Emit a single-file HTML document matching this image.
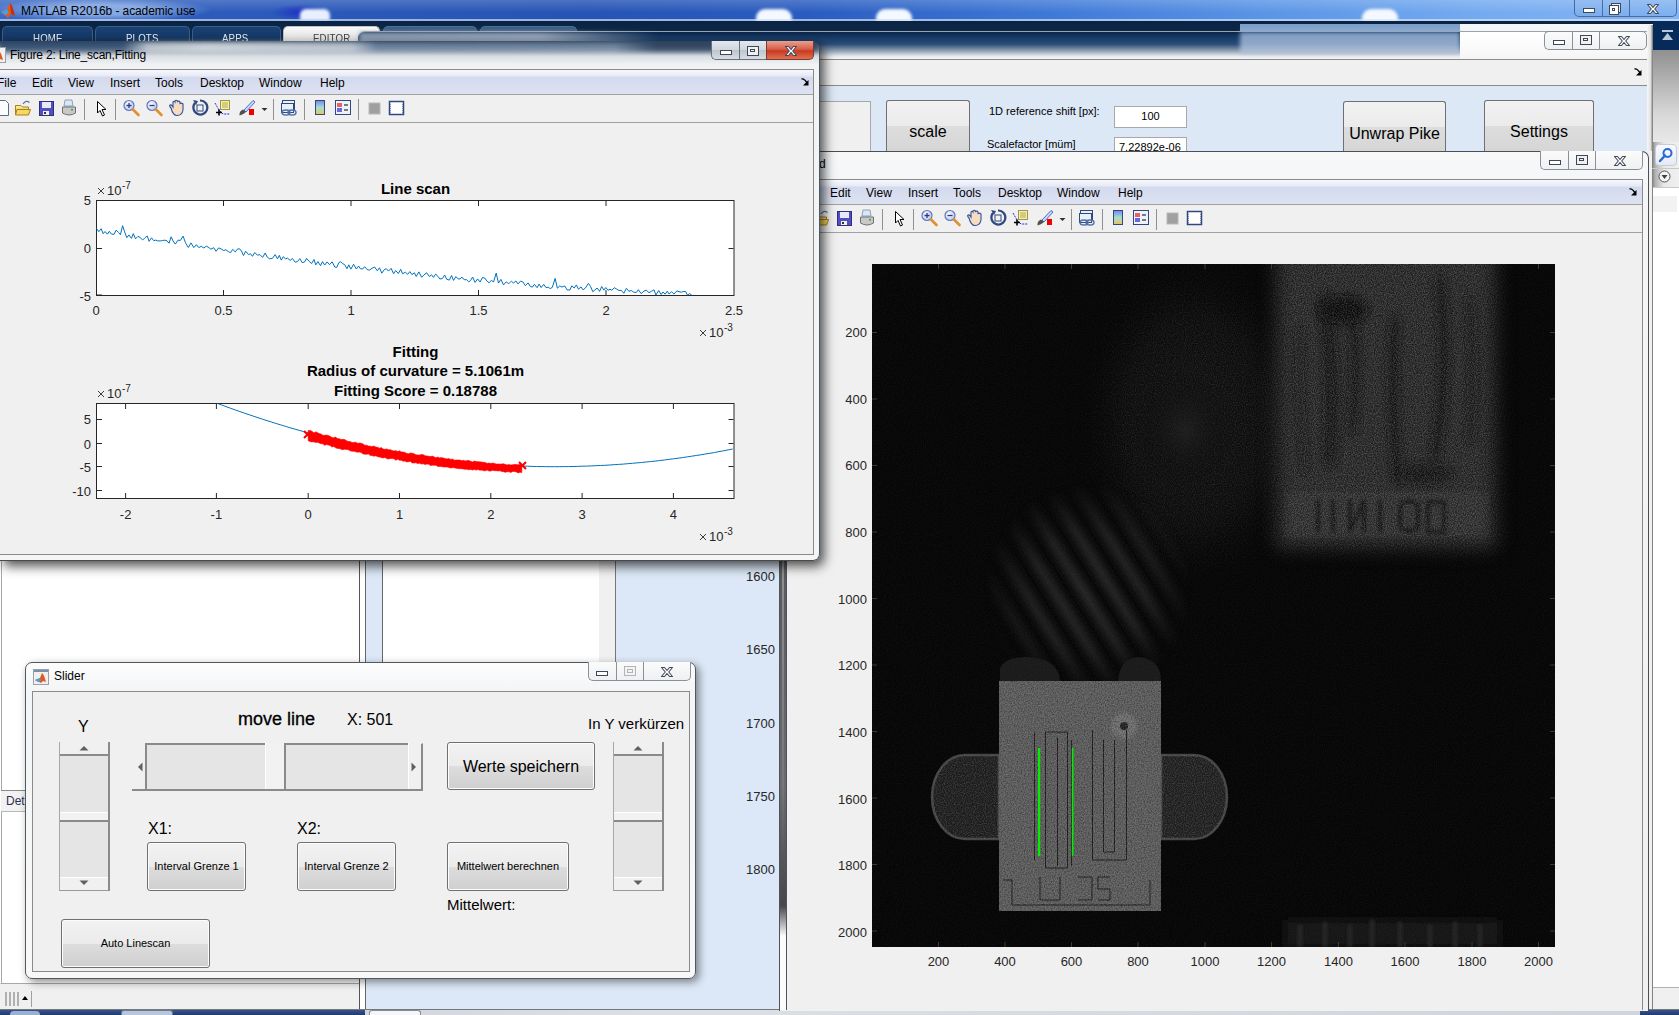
<!DOCTYPE html>
<html><head><meta charset="utf-8">
<style>
*{box-sizing:border-box;}
html,body{margin:0;padding:0;}
body{width:1679px;height:1015px;overflow:hidden;position:relative;background:#f0f0f0;font-family:"Liberation Sans",sans-serif;font-size:12px;color:#000;}
.a{position:absolute;}
.t{position:absolute;white-space:nowrap;line-height:1;}

</style></head>
<body>
<svg width="0" height="0" style="position:absolute">
<defs>
<linearGradient id="gFold" x1="0" y1="0" x2="0" y2="1"><stop offset="0" stop-color="#fff3a8"/><stop offset="1" stop-color="#e0b030"/></linearGradient>
<linearGradient id="gCbar" x1="0" y1="0" x2="0" y2="1"><stop offset="0" stop-color="#8080f0"/><stop offset="0.5" stop-color="#a0e0d0"/><stop offset="1" stop-color="#f0c060"/></linearGradient>
<radialGradient id="gLens" cx="0.4" cy="0.4" r="0.6"><stop offset="0" stop-color="#ffffff"/><stop offset="1" stop-color="#b8c8f0"/></radialGradient>
<g id="tb">
 <!-- new doc -->
 <path d="M-1,4.5 H5.5 L8.5,7.5 V19.5 H-1 Z" fill="#fafcff" stroke="#5a6c8c" stroke-width="1"/>
 <!-- open folder -->
 <path d="M15.5,9.5 H21 L22.5,11 H28.5 V18.5 H15.5 Z" fill="url(#gFold)" stroke="#a88018" stroke-width="1"/>
 <path d="M17,13.5 H30.5 L28.5,19 H15.5 Z" fill="#f8d860" stroke="#a88018" stroke-width="1"/>
 <path d="M23,8 Q26,3.5 29.5,6.5" fill="none" stroke="#5a78a0" stroke-width="1.2"/>
 <!-- save -->
 <rect x="39.5" y="5.5" width="14" height="14" fill="#5050c0" stroke="#303078"/>
 <rect x="42" y="6" width="9" height="6" fill="#e8e8f8"/>
 <rect x="43" y="15" width="6" height="4" fill="#f0f0f0"/><rect x="44" y="16" width="2" height="2" fill="#303030"/>
 <!-- print -->
 <path d="M65,4 H72 L73,10 H64 Z" fill="#d8e8f8" stroke="#7890a8" stroke-width="0.8"/>
 <path d="M62.5,11 H75.5 V17 Q69,21 62.5,17 Z" fill="#c8c8c8" stroke="#707070" stroke-width="1"/>
 <rect x="71" y="13" width="2" height="1.5" fill="#40a040"/>
 <!-- separators -->
 <rect x="84" y="3" width="1" height="21" fill="#909090"/>
 <rect x="115" y="3" width="1" height="21" fill="#909090"/>
 <rect x="273" y="3" width="1" height="21" fill="#909090"/>
 <rect x="304" y="3" width="1" height="21" fill="#909090"/>
 <rect x="358" y="3" width="1" height="21" fill="#909090"/>
 <!-- pointer -->
 <path d="M97.5,5.5 V17 L100,14.5 L102.5,20 L104.5,19 L102,13.5 H106 Z" fill="#fff" stroke="#000" stroke-width="1"/>
 <!-- zoom in -->
 <circle cx="129" cy="9.5" r="5" fill="url(#gLens)" stroke="#6878b8" stroke-width="1.2"/>
 <path d="M133,13.5 L138.5,19" stroke="#e09030" stroke-width="2.6" stroke-linecap="round"/>
 <path d="M126.5,9.5 H131.5 M129,7 V12" stroke="#2a3a88" stroke-width="1.3"/>
 <!-- zoom out -->
 <circle cx="152" cy="9.5" r="5" fill="url(#gLens)" stroke="#6878b8" stroke-width="1.2"/>
 <path d="M156,13.5 L161.5,19" stroke="#e09030" stroke-width="2.6" stroke-linecap="round"/>
 <path d="M149.5,9.5 H154.5" stroke="#2a3a88" stroke-width="1.3"/>
 <!-- pan hand -->
 <path d="M171,12 Q169,10 170,9 Q171.5,8.5 173,11 V6 Q174,4.5 175,6 V5 Q176,3.5 177.5,5 V5.5 Q179,4.5 180,6 V7.5 Q181.5,6.5 183,8 V14 Q182,19.5 177,19.5 Q173,19.5 171,12 Z" fill="#f8dcc0" stroke="#3050a0" stroke-width="1.1"/>
 <!-- rotate -->
 <path d="M195,7 A7,7 0 1 0 200,4.5" fill="none" stroke="#304880" stroke-width="2.2"/>
 <path d="M193,4 L196,9 L198,5 Z" fill="#304880"/>
 <rect x="197" y="9" width="6" height="6" fill="none" stroke="#304880" stroke-width="1"/>
 <!-- data cursor -->
 <rect x="220.5" y="4.5" width="9" height="9" fill="#f4f0b0" stroke="#a09840"/>
 <path d="M222,7 H228 M222,9 H228 M222,11 H228" stroke="#a09840" stroke-width="0.8"/>
 <path d="M215,7 L219,14 L223,18 H230" fill="none" stroke="#2030e0" stroke-width="1" stroke-dasharray="2,1"/>
 <path d="M216,16.5 H222 M219,13.5 V19.5" stroke="#000" stroke-width="1.6"/>
 <!-- brush -->
 <path d="M244,14 L253,4.5 L255,6 L246,16 Z" fill="#c8d8f8" stroke="#4060c0" stroke-width="0.9"/>
 <path d="M243,13.5 Q239,15 239.5,19.5 Q243,19 246,16 Z" fill="#505050"/>
 <rect x="249" y="13" width="5" height="6" fill="#f00000"/>
 <path d="M261.5,108 H267.5 L264.5,111 Z" transform="translate(0,-96)" fill="#303030"/>
 <!-- link -->
 <rect x="282.5" y="4.5" width="12" height="9" fill="#e8f0f8" stroke="#304880"/>
 <rect x="281.5" y="7.5" width="12" height="9" fill="#e8f0f8" stroke="#304880"/>
 <ellipse cx="286" cy="16.5" rx="4" ry="2.5" fill="none" stroke="#5070a8" stroke-width="1.4"/>
 <ellipse cx="292" cy="16.5" rx="4" ry="2.5" fill="none" stroke="#5070a8" stroke-width="1.4"/>
 <!-- colorbar -->
 <rect x="315.5" y="4.5" width="9" height="14" fill="url(#gCbar)" stroke="#304880"/>
 <!-- legend -->
 <rect x="335.5" y="4.5" width="15" height="14" fill="#eef2fa" stroke="#304880"/>
 <rect x="337" y="7" width="5" height="4" fill="#e86060"/><rect x="337" y="12" width="5" height="4" fill="#6868e0"/>
 <path d="M344,9 H348 M344,14 H348" stroke="#000" stroke-width="1"/>
 <!-- hide -->
 <rect x="369" y="7" width="11" height="11" fill="#a0a0a0" stroke="#b8b8b8"/>
 <!-- show -->
 <rect x="389.5" y="5.5" width="14" height="13" fill="#fff" stroke="#304880" stroke-width="1.5"/>
 <path d="M390,8 V17 M403,8 V17" stroke="#304880" stroke-width="1" stroke-dasharray="1,1"/>
 <rect x="392" y="8" width="9" height="8" fill="#fff"/>
</g>
</defs></svg>

<!-- MATLAB title bar -->
<div class="a" style="left:0;top:0;width:1679px;height:21px;background:linear-gradient(90deg,#3a68c4 0%,#2d5cbc 10%,#2554b4 35%,#2a5cc0 48%,#3e78d6 62%,#5a94e6 75%,#74aaf0 88%,#84b6f4 100%);"></div>
<div class="a" style="left:0;top:0;width:1679px;height:21px;background:linear-gradient(180deg,rgba(255,255,255,0.18) 0%,rgba(255,255,255,0) 60%);"></div>
<div class="a" style="left:270px;top:4px;width:60px;height:16px;border-radius:8px;background:radial-gradient(ellipse at center,rgba(30,40,200,0.8),rgba(60,90,220,0) 70%);"></div>
<div class="a" style="left:300px;top:9px;width:30px;height:12px;border-radius:6px 6px 2px 2px;background:#e8f0ff;filter:blur(1.5px);"></div>
<div class="a" style="left:756px;top:9px;width:36px;height:14px;border-radius:9px 9px 2px 2px;background:#f4f8ff;filter:blur(1.5px);"></div>
<div class="a" style="left:876px;top:9px;width:36px;height:14px;border-radius:9px 9px 2px 2px;background:#f4f8ff;filter:blur(1.5px);"></div>
<div class="a" style="left:1362px;top:9px;width:36px;height:14px;border-radius:9px 9px 2px 2px;background:#f4f8ff;filter:blur(1.5px);"></div>
<div class="a" style="left:0;top:19px;width:1679px;height:2px;background:linear-gradient(90deg,#c8d8f0,#d8e6fa);opacity:0.7;"></div>
<div class="a" style="left:-10px;top:-2px;width:220px;height:24px;border-radius:12px;background:radial-gradient(ellipse at center,rgba(200,225,255,0.55) 30%,rgba(200,225,255,0) 72%);"></div>
<svg class="a" style="left:0;top:1px" width="18" height="18"><path d="M1,11 L7,8 L10,2 Q12,3 15,15 L11,13 L8,17 Z" fill="#e05a20"/><path d="M1,11 L7,8 L9,12 L5,14 Z" fill="#4aa0d8"/><path d="M10,2 Q12,3 15,15 L11,13 Z" fill="#c03010"/></svg>
<div class="t" style="left:21px;top:5px;font-size:12px;letter-spacing:-0.1px;color:#000;">MATLAB R2016b - academic use</div>
<!-- main title buttons -->
<div class="a" style="left:1574px;top:0;width:103px;height:17px;border:1px solid #4a6aa0;border-top:none;border-radius:0 0 5px 5px;background:linear-gradient(180deg,rgba(150,190,240,0.6),rgba(120,170,235,0.5));"></div>
<div class="a" style="left:1602px;top:0;width:1px;height:16px;background:#4a6aa0;"></div>
<div class="a" style="left:1629px;top:0;width:1px;height:16px;background:#4a6aa0;"></div>
<div class="a" style="left:1583px;top:8px;width:12px;height:5px;border:1.5px solid #404858;background:#fff;"></div>
<div class="a" style="left:1611px;top:3px;width:10px;height:10px;border:1.5px solid #404858;background:#eee;"></div>
<div class="a" y style="left:1609px;top:5px;width:10px;height:10px;border:1.5px solid #404858;background:#fff;"><div class="a" style="left:2px;top:2px;width:3px;height:3px;border:1.2px solid #404858;"></div></div>
<svg class="a" style="left:1646px;top:2px" width="14" height="13"><path d="M1.5,2.5 L4.5,2.5 L7,5.5 L9.5,2.5 L12.5,2.5 L8.7,7 L12.5,11.5 L9.5,11.5 L7,8.5 L4.5,11.5 L1.5,11.5 L5.3,7 Z" fill="#fff" stroke="#404858" stroke-width="1.1" stroke-linejoin="round"/></svg>
<!-- tab strip -->
<div class="a" style="left:0;top:21px;width:1679px;height:20px;background:linear-gradient(180deg,#0a2342,#0f2b50);"></div>
<div class="a" style="left:2px;top:26px;width:91px;height:16px;border:1px solid #3a5e8c;border-bottom:none;border-radius:5px 5px 0 0;background:linear-gradient(180deg,#1a4274,#133560);"></div>
<div class="a" style="left:95px;top:26px;width:95px;height:16px;border:1px solid #3a5e8c;border-bottom:none;border-radius:5px 5px 0 0;background:linear-gradient(180deg,#1a4274,#133560);"></div>
<div class="a" style="left:192px;top:26px;width:89px;height:16px;border:1px solid #3a5e8c;border-bottom:none;border-radius:5px 5px 0 0;background:linear-gradient(180deg,#1a4274,#133560);"></div>
<div class="a" style="left:283px;top:26px;width:97px;height:16px;border:1px solid #c0c0c0;border-bottom:none;border-radius:5px 5px 0 0;background:linear-gradient(180deg,#fafafa,#dcdcdc);"></div>
<div class="a" style="left:383px;top:26px;width:94px;height:16px;border:1px solid #4a6e98;border-bottom:none;border-radius:5px 5px 0 0;background:linear-gradient(180deg,#3c6088,#2a4a70);"></div>
<div class="a" style="left:480px;top:26px;width:97px;height:16px;border:1px solid #4a6e98;border-bottom:none;border-radius:5px 5px 0 0;background:linear-gradient(180deg,#3c6088,#2a4a70);"></div>
<div class="t" style="left:33px;top:33px;font-size:11.5px;color:#e8eef6;letter-spacing:0.2px;transform:scaleX(0.84);transform-origin:0 0;">HOME</div>
<div class="t" style="left:126px;top:33px;font-size:11.5px;color:#e8eef6;letter-spacing:0.2px;transform:scaleX(0.84);transform-origin:0 0;">PLOTS</div>
<div class="t" style="left:222px;top:33px;font-size:11.5px;color:#e8eef6;letter-spacing:0.2px;transform:scaleX(0.84);transform-origin:0 0;">APPS</div>
<div class="t" style="left:313px;top:33px;font-size:11.5px;color:#404040;letter-spacing:0.2px;transform:scaleX(0.84);transform-origin:0 0;">EDITOR</div>
<!-- far right sidebar -->
<div class="a" style="left:1653px;top:21px;width:26px;height:29px;background:#062a5a;"></div>
<svg class="a" style="left:1661px;top:29px" width="14" height="14"><rect x="1" y="1" width="11" height="2" fill="#b8c8d8"/><path d="M6.5,4 L12,11 H1 Z" fill="#b8c8d8"/></svg>
<div class="a" style="left:1652px;top:50px;width:27px;height:960px;background:linear-gradient(90deg,#7a7a7a 0px,#b0b0b0 3px,#e8e8e8 12px,#f0f0f0 27px);"></div>
<div class="a" style="left:1652px;top:50px;width:27px;height:92px;background:linear-gradient(180deg,#909090,#d8d8d8 70%,#e8e8e8);"></div>
<div class="a" style="left:1655px;top:144px;width:22px;height:22px;border:1px solid #c8ccd4;border-radius:4px;background:linear-gradient(180deg,#f8faff,#e4eaf4);"></div>
<svg class="a" style="left:1658px;top:147px" width="16" height="16"><circle cx="9.5" cy="6" r="4" fill="none" stroke="#2a6ad0" stroke-width="2"/><path d="M7,8.5 L2,14" stroke="#2a6ad0" stroke-width="2.4" stroke-linecap="round"/></svg>
<div class="a" style="left:1652px;top:168px;width:27px;height:1px;background:#c8c8c8;"></div>
<svg class="a" style="left:1658px;top:170px" width="14" height="14"><circle cx="6.5" cy="6.5" r="5.5" fill="#f4f4f4" stroke="#505050" stroke-width="1"/><path d="M3.5,5 H9.5 L6.5,9 Z" fill="#404040"/></svg>
<div class="a" style="left:1653px;top:187px;width:26px;height:800px;background:#fff;border-top:1px solid #c8c8c8;"></div>
<div class="a" style="left:1653px;top:196px;width:24px;height:16px;background:#f2f2f2;"></div>
<div class="a" style="left:1653px;top:987px;width:26px;height:23px;background:#f0f0f0;border-top:1px solid #b0b0b0;"></div>
<!-- lower background -->
<div class="a" style="left:0;top:561px;width:359px;height:423px;background:#fff;border-left:1px solid #fff;border-bottom:1px solid #a8a8a8;box-shadow:inset 1px 0 0 #a8a8a8;"></div>
<div class="a" style="left:1px;top:790px;width:358px;height:22px;background:#f2f2f2;border-top:1px solid #8a8a8a;border-bottom:1px solid #b8b8b8;"></div>
<div class="t" style="left:6px;top:795px;font-size:12px;color:#303050;">Det</div>
<div class="a" style="left:0;top:985px;width:359px;height:25px;background:#f0f0f0;"></div>
<svg class="a" style="left:4px;top:991px" width="30" height="16"><g fill="#b0b0b0"><rect x="1" y="1" width="2" height="14"/><rect x="5" y="1" width="2" height="14"/><rect x="9" y="1" width="2" height="14"/><rect x="13" y="1" width="2" height="14"/></g><path d="M18,9 H24 L21,5 Z" fill="#000"/><rect x="27" y="0" width="1" height="16" fill="#a0a0a0"/></svg>
<div class="a" style="left:359px;top:561px;width:7px;height:449px;background:#fff;border-left:1px solid #555;border-right:1px solid #666;"></div>

<div class="a" style="left:366px;top:561px;width:413px;height:449px;background:#dce8f7;"></div>
<div class="a" style="left:382px;top:561px;width:1px;height:414px;background:#666;"></div>
<div class="a" style="left:383px;top:561px;width:216px;height:414px;background:#fff;"></div>
<div class="a" style="left:599px;top:561px;width:17px;height:414px;background:#f0f0f0;border-right:1px solid #777;"></div>
<svg class="a" style="left:616px;top:561px" width="163" height="449" viewBox="616 561 163 449" font-family="Liberation Sans">
 <g font-size="13" fill="#262626" text-anchor="end">
  <text x="775" y="581">1600</text><text x="775" y="654">1650</text><text x="775" y="728">1700</text><text x="775" y="801">1750</text><text x="775" y="874">1800</text>
 </g>
</svg>
<div class="a" style="left:0;top:1009px;width:1679px;height:1px;background:#707880;"></div>
<div class="a" style="left:0;top:1010px;width:1679px;height:5px;background:linear-gradient(90deg,#c8ccd2 0%,#dcdfe4 40%,#d0d4da 100%);"></div>
<div class="a" style="left:0;top:1010px;width:365px;height:5px;background:linear-gradient(180deg,#3a5488,#1e3a6e);"></div>
<div class="a" style="left:10px;top:1011px;width:30px;height:4px;background:#9ab0d0;border-radius:15px 15px 0 0;"></div>
<div class="a" style="left:121px;top:1010px;width:52px;height:5px;background:#b8c6dc;border:1px solid #6a7a90;border-bottom:none;border-radius:3px 3px 0 0;"></div>
<div class="a" style="left:369px;top:1010px;width:52px;height:5px;background:#f4f6fa;border:1px solid #8a8a8a;border-bottom:none;border-radius:3px 3px 0 0;"></div>
<div class="a" style="left:1640px;top:1010px;width:39px;height:5px;background:linear-gradient(180deg,#3a5488,#1e3a6e);"></div>

<!-- GUI window behind (glass title) -->
<div class="a" style="left:1240px;top:24px;width:220px;height:8px;background:linear-gradient(180deg,#7a9cc8,#8aacd4);"></div>
<div class="a" style="left:1460px;top:24px;width:193px;height:8px;background:#f4f6f8;"></div>
<div class="a" style="left:358px;top:31px;width:1295px;height:28px;border-radius:7px 7px 0 0;background:linear-gradient(180deg,#0c2548 0%,#163a66 20%,#2a4c76 45%,#9aa8b8 72%,#e8ebee 90%,#f4f5f6 100%);border-top:1px solid #9aa4b0;"></div>
<div class="a" style="left:359px;top:32px;width:300px;height:14px;background:linear-gradient(90deg,rgba(150,165,185,0.9) 0%,rgba(170,182,198,0.85) 60%,rgba(40,70,110,0) 100%);filter:blur(2px);"></div>
<div class="a" style="left:1240px;top:32px;width:220px;height:22px;background:linear-gradient(180deg,rgba(140,170,210,0.9),rgba(185,200,220,0.8));filter:blur(2px);"></div>
<div class="a" style="left:1460px;top:32px;width:192px;height:27px;background:linear-gradient(180deg,#ffffff,#fafafa 60%,#f4f4f4);border-radius:0 6px 0 0;"></div>
<div class="a" style="left:1544px;top:31px;width:28px;height:19px;border:1px solid #8a9098;border-right:none;border-radius:5px 0 0 5px;background:linear-gradient(180deg,#fbfbfb,#eef0f2);"></div>
<div class="a" style="left:1572px;top:31px;width:27px;height:19px;border:1px solid #8a9098;border-right:none;background:linear-gradient(180deg,#fbfbfb,#eef0f2);"></div>
<div class="a" style="left:1599px;top:31px;width:48px;height:19px;border:1px solid #8a9098;border-radius:0 5px 5px 0;background:linear-gradient(180deg,#fbfbfb,#eef0f2);"></div>
<div class="a" style="left:1553px;top:40px;width:12px;height:5px;border:1.5px solid #404858;background:#fff;"></div>
<div class="a" style="left:1580px;top:35px;width:12px;height:10px;border:1.5px solid #404858;background:#f0f0f0;"><div class="a" style="left:2px;top:2px;width:5px;height:3px;border:1.5px solid #404858;"></div></div>
<svg class="a" style="left:1617px;top:34px" width="14" height="14"><path d="M1.5,2.5 L4.5,2.5 L7,5.5 L9.5,2.5 L12.5,2.5 L8.7,7 L12.5,11.5 L9.5,11.5 L7,8.5 L4.5,11.5 L1.5,11.5 L5.3,7 Z" fill="#fff" stroke="#404858" stroke-width="1.1" stroke-linejoin="round"/></svg>
<div class="a" style="left:360px;top:59px;width:1287px;height:27px;background:#f0f0f0;border-top:1px solid #8a8a8a;border-bottom:1px solid #8a8a8a;"></div>
<svg class="a" style="left:1633px;top:67px" width="10" height="10"><path d="M1.5,2 Q4,1 7.5,6.5" fill="none" stroke="#000" stroke-width="1.4"/><path d="M8.5,3 V8.5 H3 Z" fill="#000"/></svg>
<div class="a" style="left:360px;top:86px;width:1287px;height:65px;background:#dde8f7;"></div>
<div class="a" style="left:1647px;top:25px;width:6px;height:126px;background:linear-gradient(90deg,#f8f8f8,#e0e0e0 60%,#707070);"></div>
<!-- GUI controls -->
<div class="a" style="left:780px;top:101px;width:91px;height:50px;background:#f0f0f0;border:1px solid #a8a8a8;border-bottom:none;"></div>
<div class="a" style="left:886px;top:100px;width:84px;height:51px;border:1px solid #707070;border-bottom:none;border-radius:3px 3px 0 0;background:linear-gradient(180deg,#f2f2f2 0%,#ebebeb 50%,#dddddd 51%,#d6d6d6 100%);"></div>
<div class="t" style="left:886px;top:124px;width:84px;text-align:center;font-size:16px;">scale</div>
<div class="t" style="left:989px;top:106px;font-size:11px;">1D reference shift [px]:</div>
<div class="a" style="left:1114px;top:106px;width:73px;height:22px;background:#fff;border:1px solid #a8a8a8;"></div>
<div class="t" style="left:1114px;top:111px;width:73px;text-align:center;font-size:11px;">100</div>
<div class="t" style="left:987px;top:139px;font-size:11px;">Scalefactor [müm]</div>
<div class="a" style="left:1114px;top:137px;width:73px;height:14px;background:#fff;border:1px solid #a8a8a8;border-bottom:none;overflow:hidden;"><div class="t" style="left:4px;top:4px;font-size:11px;">7.22892e-06</div></div>
<div class="a" style="left:1343px;top:101px;width:103px;height:50px;border:1px solid #707070;border-bottom:none;border-radius:3px 3px 0 0;background:linear-gradient(180deg,#f2f2f2 0%,#ebebeb 50%,#dddddd 51%,#d6d6d6 100%);"></div>
<div class="t" style="left:1343px;top:126px;width:103px;text-align:center;font-size:16px;">Unwrap Pike</div>
<div class="a" style="left:1484px;top:100px;width:110px;height:51px;border:1px solid #707070;border-bottom:none;border-radius:3px 3px 0 0;background:linear-gradient(180deg,#f2f2f2 0%,#ebebeb 50%,#dddddd 51%,#d6d6d6 100%);"></div>
<div class="t" style="left:1484px;top:124px;width:110px;text-align:center;font-size:16px;">Settings</div>

<!-- Figure 1 window -->
<div class="a" style="left:779px;top:151px;width:870px;height:860px;background:linear-gradient(180deg,#f8f8f8 0px,#f4f6f8 28px,#eef0f2 100%);border:1px solid #4a4f58;border-bottom:none;border-radius:7px 7px 0 0;"></div>
<div class="a" style="left:779px;top:561px;width:8px;height:449px;background:#fafbfc;border-left:1px solid #505458;border-right:1px solid #505458;"></div>
<div class="a" style="left:780px;top:561px;width:6px;height:375px;background:linear-gradient(180deg,rgba(70,72,76,0.9) 0%,rgba(80,82,86,0.85) 60%,rgba(60,62,66,0.95) 92%,rgba(60,62,66,0) 100%);"></div>
<div class="a" style="left:782px;top:561px;width:2px;height:300px;background:linear-gradient(180deg,rgba(200,200,200,0.5),rgba(200,200,200,0.3) 40%,rgba(200,200,200,0));"></div>
<div class="t" style="left:819px;top:158px;font-size:12px;">d</div>
<div class="a" style="left:1540px;top:151px;width:28px;height:19px;border:1px solid #8a9098;border-top:none;border-right:none;border-radius:0 0 0 5px;background:linear-gradient(180deg,#fbfbfb,#f0f1f3);"></div>
<div class="a" style="left:1568px;top:151px;width:27px;height:19px;border-left:1px solid #8a9098;border-bottom:1px solid #8a9098;background:linear-gradient(180deg,#fbfbfb,#f0f1f3);"></div>
<div class="a" style="left:1595px;top:151px;width:48px;height:19px;border:1px solid #8a9098;border-top:none;border-radius:0 0 5px 0;background:linear-gradient(180deg,#fbfbfb,#f0f1f3);"></div>
<div class="a" style="left:1549px;top:160px;width:12px;height:5px;border:1.5px solid #404858;background:#fff;"></div>
<div class="a" style="left:1576px;top:155px;width:12px;height:10px;border:1.5px solid #404858;background:#f0f0f0;"><div class="a" style="left:2px;top:2px;width:5px;height:3px;border:1.5px solid #404858;"></div></div>
<svg class="a" style="left:1613px;top:154px" width="14" height="14"><path d="M1.5,2.5 L4.5,2.5 L7,5.5 L9.5,2.5 L12.5,2.5 L8.7,7 L12.5,11.5 L9.5,11.5 L7,8.5 L4.5,11.5 L1.5,11.5 L5.3,7 Z" fill="#fff" stroke="#404858" stroke-width="1.1" stroke-linejoin="round"/></svg>
<div class="a" style="left:787px;top:179px;width:856px;height:831px;background:#f0f0f0;border-top:1px solid #8a8a8a;border-right:1px solid #8a8a8a;"></div>
<div class="a" style="left:787px;top:180px;width:855px;height:25px;background:linear-gradient(180deg,#f8f9fd 0%,#e6eaf6 25%,#d4daee 30%,#dde2f2 100%);border-bottom:1px solid #a0a0a0;"></div>
<div class="t" style="left:830px;top:187px;font-size:12px;">Edit</div>
<div class="t" style="left:866px;top:187px;font-size:12px;">View</div>
<div class="t" style="left:908px;top:187px;font-size:12px;">Insert</div>
<div class="t" style="left:953px;top:187px;font-size:12px;">Tools</div>
<div class="t" style="left:998px;top:187px;font-size:12px;">Desktop</div>
<div class="t" style="left:1057px;top:187px;font-size:12px;">Window</div>
<div class="t" style="left:1118px;top:187px;font-size:12px;">Help</div>
<svg class="a" style="left:1628px;top:187px" width="10" height="10"><path d="M1.5,2 Q4,1 7.5,6.5" fill="none" stroke="#000" stroke-width="1.4"/><path d="M8.5,3 V8.5 H3 Z" fill="#000"/></svg>
<div class="a" style="left:787px;top:232px;width:855px;height:1px;background:#a0a0a0;"></div>
<svg class="a" style="left:798px;top:206px;clip-path:inset(0 0 0 22px)" width="420" height="26"><use href="#tb"/></svg>
<div class="a" style="left:1010px;top:1010px;width:0;height:0;"></div>
<svg class="a" style="left:872px;top:264px" width="683" height="683" viewBox="872 264 683 683">
<defs>
<filter id="nz" x="0" y="0" width="100%" height="100%"><feTurbulence type="fractalNoise" baseFrequency="0.9" numOctaves="1" seed="3"/><feColorMatrix type="matrix" values="0 0 0 0 1  0 0 0 0 1  0 0 0 0 1  1.6 0 0 0 -0.62"/></filter>
<filter id="nzd" x="0" y="0" width="100%" height="100%"><feTurbulence type="fractalNoise" baseFrequency="0.7" numOctaves="1" seed="9"/><feColorMatrix type="matrix" values="0 0 0 0 0  0 0 0 0 0  0 0 0 0 0  1.8 0 0 0 -0.75"/></filter>
<filter id="bl4" x="-50%" y="-50%" width="200%" height="200%"><feGaussianBlur stdDeviation="4"/></filter>
<filter id="bl8" x="-50%" y="-50%" width="200%" height="200%"><feGaussianBlur stdDeviation="9"/></filter>
<filter id="bl2" x="-50%" y="-50%" width="200%" height="200%"><feGaussianBlur stdDeviation="1.5"/></filter>
<filter id="bl15" x="-80%" y="-80%" width="260%" height="260%"><feGaussianBlur stdDeviation="18"/></filter>
<radialGradient id="rgStripe" cx="0.5" cy="0.5" r="0.5"><stop offset="0" stop-color="#fff" stop-opacity="1"/><stop offset="0.55" stop-color="#fff" stop-opacity="0.75"/><stop offset="1" stop-color="#fff" stop-opacity="0"/></radialGradient>
<mask id="mStripe"><ellipse cx="1088" cy="590" rx="105" ry="108" fill="url(#rgStripe)"/></mask>
<pattern id="pStripe" width="25" height="683" patternUnits="userSpaceOnUse" patternTransform="rotate(-32)"><rect x="0" y="0" width="11" height="683" fill="#2c2c2c"/></pattern>
<linearGradient id="lgTRx" x1="0" y1="0" x2="1" y2="0"><stop offset="0" stop-color="#fff" stop-opacity="0"/><stop offset="0.1" stop-color="#fff" stop-opacity="1"/><stop offset="0.9" stop-color="#fff" stop-opacity="1"/><stop offset="1" stop-color="#fff" stop-opacity="0"/></linearGradient>
<radialGradient id="rgBlob" cx="0.5" cy="0.5" r="0.5"><stop offset="0" stop-color="#1e1e1e"/><stop offset="1" stop-color="#060606" stop-opacity="0"/></radialGradient>
<radialGradient id="rgMid" cx="0.5" cy="0.5" r="0.5"><stop offset="0" stop-color="#121212"/><stop offset="0.6" stop-color="#0e0e0e" stop-opacity="0.8"/><stop offset="1" stop-color="#060606" stop-opacity="0"/></radialGradient>
<mask id="mTR"><rect x="1276" y="250" width="220" height="298" fill="#fff" filter="url(#bl8)"/></mask>
</defs>
<rect x="872" y="264" width="683" height="683" fill="#060606"/>
<ellipse cx="1195" cy="420" rx="120" ry="170" fill="url(#rgMid)"/><mask id="mMid"><ellipse cx="1195" cy="420" rx="120" ry="170" fill="url(#rgStripe)"/></mask><g mask="url(#mMid)"><rect x="1070" y="250" width="250" height="340" filter="url(#nz)" opacity="0.12"/></g>
<ellipse cx="1185" cy="430" rx="50" ry="60" fill="url(#rgBlob)"/>
<rect x="1285" y="920" width="215" height="27" fill="#161616" filter="url(#bl4)"/><g stroke="#242424" stroke-width="5" filter="url(#bl2)"><path d="M1300,925 V947 M1325,922 V947 M1350,925 V947 M1372,920 V947 M1400,922 V947 M1430,925 V947 M1455,922 V947 M1480,925 V947"/></g>
<g mask="url(#mStripe)"><rect x="960" y="470" width="260" height="240" fill="url(#pStripe)" filter="url(#bl4)"/></g>
<g mask="url(#mTR)">
<rect x="1250" y="264" width="270" height="310" fill="#2a2a2a"/>
<g stroke="#121212" fill="none" stroke-linecap="round" filter="url(#bl4)">
<path d="M1325,300 Q1335,380 1330,460" stroke-width="12"/>
<path d="M1350,300 Q1360,360 1352,430" stroke-width="8"/>
<path d="M1395,320 Q1390,400 1398,480" stroke-width="9"/>
<path d="M1440,280 Q1450,370 1435,455" stroke-width="9"/>
<path d="M1470,300 Q1475,380 1470,440" stroke-width="6"/>
<path d="M1300,330 Q1298,400 1305,470" stroke-width="5"/>
</g>
<ellipse cx="1343" cy="310" rx="25" ry="14" fill="#101010" filter="url(#bl4)"/>
<ellipse cx="1425" cy="474" rx="28" ry="10" fill="#121212" filter="url(#bl4)"/>
<rect x="1285" y="492" width="205" height="46" fill="#323232" filter="url(#bl2)"/>
<path d="M1318,500 v32 M1333,500 v32 M1350,500 v32 l14,-32 v32 M1380,500 v32 M1400,505 q10,-8 18,0 v22 q-8,8 -18,0 z M1428,502 h16 v30 h-16 z" stroke="#141414" stroke-width="4" fill="none" filter="url(#bl2)"/>
<rect x="1250" y="264" width="270" height="310" filter="url(#nzd)" opacity="0.7"/>
<rect x="1250" y="264" width="270" height="310" filter="url(#nz)" opacity="0.25"/>
</g>
<path d="M999,755 H965 A33,42 0 0 0 965,839 H999 Z" fill="#1c1c1c" stroke="#444" stroke-width="2.5"/>
<path d="M1161,755 H1194 A33,42 0 0 1 1194,839 H1161 Z" fill="#1e1e1e" stroke="#444" stroke-width="2.5"/>
<path d="M1000,681 V668 Q1005,657 1025,657 Q1058,657 1060,681 Z" fill="#1a1a1a"/>
<path d="M1118,681 Q1120,657 1140,657 Q1161,660 1161,681 Z" fill="#1a1a1a"/>
<rect x="999" y="681" width="162" height="230" fill="#5e5e5e"/>
<circle cx="1124" cy="726" r="13" fill="#707070" filter="url(#bl2)"/><circle cx="1124" cy="726" r="4" fill="#242424"/>
<g stroke="#1c1c1c" stroke-width="1" fill="none">
<path d="M1034.5,732 V860 M1045.5,732 V868 H1067.5 V732 Z M1057.5,738 V866 M1071.5,740 V866 M1092.5,730 V860 H1126.5 V730 M1103.5,740 V852 H1114.5 V740"/>
<path d="M1003,880 H1012 V905 H1150 V880 M1040,877 V900 H1060 V877 M1078,877 H1092 V900 H1078 M1110,877 H1098 V889 H1110 V900 H1098"/>
</g>
<rect x="999" y="681" width="162" height="230" filter="url(#nzd)" opacity="0.5"/>
<rect x="999" y="681" width="162" height="230" filter="url(#nz)" opacity="0.18"/>
<clipPath id="cpLobe"><path d="M999,755 H965 A33,42 0 0 0 965,839 H999 Z M1161,755 H1194 A33,42 0 0 1 1194,839 H1161 Z"/></clipPath><g clip-path="url(#cpLobe)"><rect x="930" y="752" width="297" height="90" filter="url(#nz)" opacity="0.2"/></g>
<rect x="872" y="264" width="683" height="683" filter="url(#nz)" opacity="0.06"/>
<rect x="1038" y="748" width="2.2" height="108" fill="#00ee00"/>
<rect x="1071.8" y="748" width="1.6" height="108" fill="#00ee00"/>
</svg>
<!-- axes labels -->
<svg class="a" style="left:872px;top:264px" width="683" height="683"><g stroke="#3a3a3a" stroke-width="1"><path d="M0,68.5 h5 M0,135 h5 M0,201.5 h5 M0,268 h5 M0,334.5 h5 M0,401 h5 M0,467.5 h5 M0,534 h5 M0,600.5 h5 M0,667 h5 M683,68.5 h-5 M683,135 h-5 M683,201.5 h-5 M683,268 h-5 M683,334.5 h-5 M683,401 h-5 M683,467.5 h-5 M683,534 h-5 M683,600.5 h-5 M683,667 h-5 M66.5,683 v-5 M133,683 v-5 M199.5,683 v-5 M266,683 v-5 M333,683 v-5 M399.5,683 v-5 M466.5,683 v-5 M533,683 v-5 M600,683 v-5 M666.5,683 v-5 M66.5,0 v5 M133,0 v5 M199.5,0 v5 M266,0 v5 M333,0 v5 M399.5,0 v5 M466.5,0 v5 M533,0 v5 M600,0 v5 M666.5,0 v5"/></g></svg>
<svg class="a" style="left:787px;top:233px" width="855" height="777" viewBox="787 233 855 777" font-family="Liberation Sans">
 <g font-size="13" fill="#262626" text-anchor="end">
  <text x="867" y="337">200</text><text x="867" y="403.5">400</text><text x="867" y="470">600</text><text x="867" y="537">800</text><text x="867" y="603.5">1000</text><text x="867" y="670">1200</text><text x="867" y="737">1400</text><text x="867" y="803.5">1600</text><text x="867" y="870">1800</text><text x="867" y="937">2000</text>
 </g>
 <g font-size="13" fill="#262626" text-anchor="middle">
  <text x="938.5" y="966">200</text><text x="1005" y="966">400</text><text x="1071.5" y="966">600</text><text x="1138" y="966">800</text><text x="1205" y="966">1000</text><text x="1271.5" y="966">1200</text><text x="1338.5" y="966">1400</text><text x="1405" y="966">1600</text><text x="1472" y="966">1800</text><text x="1538.5" y="966">2000</text>
 </g>
</svg>

<!-- Figure 2 window -->
<div class="a" style="left:0;top:41px;width:820px;height:520px;background:linear-gradient(180deg,#32506e 0px,#6f8299 5px,#d8dde2 14px,#eff1f3 22px,#f2f3f4 28px,#f4f5f6 100%);border-radius:0 7px 7px 0;box-shadow:4px 5px 12px rgba(0,0,0,0.7);border-right:1px solid #505860;border-top:1px solid #404a58;border-bottom:1px solid #4a4a4a;"></div>
<div class="a" style="left:0;top:42px;width:819px;height:10px;background:linear-gradient(90deg,rgba(20,50,90,0.55) 0%,rgba(20,50,90,0.5) 15%,rgba(230,230,230,0.6) 18%,rgba(240,240,240,0.7) 25%,rgba(230,232,236,0.6) 43%,rgba(110,130,160,0.5) 46%,rgba(120,140,165,0.45) 75%,rgba(20,40,70,0.6) 80%,rgba(20,40,70,0.6) 100%);filter:blur(2px);"></div>
<svg class="a" style="left:-10px;top:47px" width="16" height="16"><rect x="0.5" y="0.5" width="15" height="15" fill="#f0f0f0" stroke="#9aa0a8"/><path d="M2,11 L7,9 L9,4 Q11,5 13,13 L10,12 L8,14 Z" fill="#e05a20"/></svg>
<div class="t" style="left:10px;top:49px;font-size:12px;letter-spacing:-0.2px;color:#000;">Figure 2: Line_scan,Fitting</div>
<!-- title buttons -->
<div class="a" style="left:711px;top:41px;width:28px;height:19px;border:1px solid #6a7078;border-top:none;border-right:none;border-radius:0 0 0 5px;background:linear-gradient(180deg,#e4e8ee 0%,#d0d6de 50%,#bcc4ce 51%,#d8dde4 100%);"></div>
<div class="a" style="left:739px;top:41px;width:27px;height:19px;border-left:1px solid #6a7078;border-bottom:1px solid #6a7078;background:linear-gradient(180deg,#e4e8ee 0%,#d0d6de 50%,#bcc4ce 51%,#d8dde4 100%);"></div>
<div class="a" style="left:766px;top:41px;width:48px;height:19px;border:1px solid #7a3a30;border-top:none;border-radius:0 0 5px 0;background:linear-gradient(180deg,#e8a090 0%,#d86048 45%,#c83a20 55%,#e07050 100%);"></div>
<div class="a" style="left:720px;top:50px;width:12px;height:5px;border:1.5px solid #404858;background:#fff;"></div>
<div class="a" style="left:747px;top:46px;width:12px;height:10px;border:1.5px solid #404858;background:#f0f0f0;"><div class="a" style="left:2px;top:2px;width:5px;height:3px;border:1.5px solid #404858;"></div></div>
<svg class="a" style="left:784px;top:44px" width="14" height="14"><path d="M1.5,2.5 L4.5,2.5 L7,5.5 L9.5,2.5 L12.5,2.5 L8.7,7 L12.5,11.5 L9.5,11.5 L7,8.5 L4.5,11.5 L1.5,11.5 L5.3,7 Z" fill="#fff" stroke="#404858" stroke-width="1.1" stroke-linejoin="round"/></svg>
<!-- client -->
<div class="a" style="left:0;top:69px;width:814px;height:486px;background:#f0f0f0;border-top:1px solid #8a8a8a;border-right:1px solid #8a8a8a;border-bottom:1px solid #8a8a8a;"></div>
<div class="a" style="left:0;top:70px;width:813px;height:25px;background:linear-gradient(180deg,#f8f9fd 0%,#e6eaf6 25%,#d4daee 30%,#dde2f2 100%);border-bottom:1px solid #a0a0a0;"></div>
<div class="t" style="left:-3px;top:77px;font-size:12px;">File</div>
<div class="t" style="left:32px;top:77px;font-size:12px;">Edit</div>
<div class="t" style="left:68px;top:77px;font-size:12px;">View</div>
<div class="t" style="left:110px;top:77px;font-size:12px;">Insert</div>
<div class="t" style="left:155px;top:77px;font-size:12px;">Tools</div>
<div class="t" style="left:200px;top:77px;font-size:12px;">Desktop</div>
<div class="t" style="left:259px;top:77px;font-size:12px;">Window</div>
<div class="t" style="left:320px;top:77px;font-size:12px;">Help</div>
<svg class="a" style="left:800px;top:77px" width="10" height="10"><path d="M1.5,2 Q4,1 7.5,6.5" fill="none" stroke="#000" stroke-width="1.4"/><path d="M8.5,3 V8.5 H3 Z" fill="#000"/></svg>
<div class="a" style="left:0;top:122px;width:813px;height:1px;background:#a0a0a0;"></div>
<svg class="a" style="left:0;top:96px" width="420" height="26"><use href="#tb"/></svg>
<!-- plots -->
<svg class="a" style="left:0;top:123px" width="813" height="431" viewBox="0 123 813 431" font-family="Liberation Sans" >
 <rect x="96.5" y="200.5" width="637.5" height="95" fill="#fff" stroke="#262626" stroke-width="1"/>
 <path d="M96.5,228.4 L98.8,231.7 L101.1,228.7 L103.2,233.7 L105.0,231.5 L107.4,234.2 L109.3,231.3 L111.5,234.1 L114.0,234.4 L116.1,230.2 L118.6,232.5 L120.4,234.7 L122.6,225.7 L124.6,231.8 L126.8,237.7 L128.9,234.9 L131.4,238.4 L133.3,233.6 L135.5,238.8 L138.0,236.3 L140.0,237.4 L142.7,240.0 L145.2,237.5 L147.2,236.0 L149.1,241.3 L151.5,237.8 L153.8,240.7 L155.7,240.1 L157.7,240.9 L160.5,240.9 L162.4,240.5 L164.9,240.2 L167.0,240.8 L169.0,243.2 L171.1,236.8 L173.1,241.0 L175.3,244.1 L178.0,240.2 L180.4,240.4 L183.1,236.1 L185.5,242.8 L188.3,247.5 L191.0,242.9 L193.8,247.6 L196.4,244.7 L198.8,247.6 L201.2,246.3 L203.9,248.0 L206.3,246.1 L208.9,247.6 L210.9,249.2 L213.6,247.7 L216.1,251.3 L218.6,247.9 L221.0,248.9 L223.7,250.5 L225.9,249.8 L228.5,251.7 L230.5,252.7 L232.7,249.4 L235.3,251.9 L237.2,249.3 L239.5,248.7 L241.5,251.1 L243.5,255.5 L245.7,251.2 L248.5,254.6 L250.5,253.7 L252.4,256.3 L254.8,252.5 L257.4,255.2 L259.9,254.6 L262.6,257.4 L265.2,253.0 L267.2,257.1 L269.7,258.9 L272.5,258.3 L275.2,254.6 L277.5,258.9 L279.3,255.3 L281.3,260.1 L283.2,256.7 L285.7,258.9 L287.6,258.1 L290.1,260.4 L292.5,258.5 L295.2,262.2 L297.5,261.5 L299.8,258.6 L302.1,262.6 L304.4,262.1 L306.6,258.4 L308.9,261.1 L311.6,263.6 L314.0,259.5 L315.8,264.9 L317.9,261.6 L320.5,265.7 L322.5,261.6 L324.7,265.1 L327.1,261.9 L329.5,264.7 L332.1,261.8 L334.9,267.2 L336.8,267.4 L338.7,262.8 L340.6,261.7 L342.6,263.7 L344.5,264.4 L347.0,268.7 L348.8,264.8 L350.8,269.2 L353.6,264.3 L356.3,269.0 L358.6,266.0 L360.4,268.8 L362.6,269.0 L364.6,266.7 L367.2,269.6 L369.4,270.1 L372.0,268.3 L374.6,267.0 L377.3,270.8 L379.5,267.8 L381.8,273.2 L384.2,269.7 L386.3,268.7 L388.5,271.1 L391.1,268.3 L393.6,273.8 L395.6,270.5 L398.3,273.5 L400.7,269.3 L402.6,273.8 L405.3,272.2 L407.6,274.3 L409.8,271.6 L411.9,274.6 L414.4,272.8 L416.2,276.5 L418.9,271.9 L421.7,277.3 L424.0,274.9 L426.7,272.8 L429.3,276.5 L431.6,274.8 L433.5,277.4 L435.6,274.1 L437.9,276.3 L439.9,279.0 L442.4,278.5 L444.7,275.0 L446.7,279.3 L449.4,280.1 L451.6,275.5 L453.5,280.4 L455.9,276.6 L458.1,278.9 L460.0,278.9 L462.0,277.1 L464.1,279.7 L466.5,279.7 L468.7,281.8 L470.5,280.6 L472.6,277.0 L475.1,282.4 L477.6,278.9 L480.1,282.0 L482.5,277.5 L484.7,278.0 L486.9,281.0 L489.1,282.8 L491.3,280.4 L493.6,281.9 L496.2,273.1 L498.5,283.1 L500.9,279.4 L503.5,284.9 L506.2,281.9 L508.8,283.7 L511.4,281.1 L513.5,283.2 L515.8,280.9 L518.0,283.9 L520.6,281.0 L523.1,282.1 L525.3,285.7 L528.1,282.9 L530.3,286.4 L532.4,287.1 L534.4,284.3 L537.1,287.7 L539.1,284.1 L541.2,287.6 L543.7,284.3 L546.0,287.7 L548.1,287.1 L550.2,288.6 L552.3,287.4 L555.1,278.4 L557.4,288.2 L559.8,285.9 L561.9,287.1 L564.7,285.9 L567.2,290.0 L569.9,290.0 L571.8,285.8 L574.2,288.0 L576.4,284.9 L578.4,289.2 L581.0,286.9 L583.1,289.8 L585.6,287.8 L588.4,283.4 L590.5,286.4 L592.8,291.7 L594.8,290.1 L597.1,288.0 L599.6,291.4 L601.7,286.5 L603.9,290.1 L605.8,287.5 L608.0,290.3 L610.0,289.2 L611.8,290.3 L614.3,287.7 L616.4,288.9 L618.9,290.5 L621.3,290.3 L623.8,293.3 L626.4,288.3 L628.9,291.3 L631.2,290.5 L633.6,292.1 L636.3,292.5 L638.4,289.7 L641.1,293.6 L643.9,291.2 L646.2,290.1 L649.0,292.7 L651.7,291.2 L654.0,289.8 L655.9,295.0 L658.7,290.5 L661.2,294.5 L663.0,292.0 L665.2,294.2 L667.2,291.2 L669.1,294.1 L671.5,291.7 L674.0,294.1 L676.8,290.9 L679.0,291.7 L681.3,292.2 L683.2,291.5 L685.6,291.5 L687.4,295.0 L689.6,293.7 L691.7,295.0" fill="none" stroke="#0072bd" stroke-width="1"/>
 <path d="M223.5,201 v5 M351,201 v5 M478.5,201 v5 M606,201 v5 M223.5,295 v-5 M351,295 v-5 M478.5,295 v-5 M606,295 v-5 M97,248.5 h5 M733.5,248.5 h-5 M97,295 h5" stroke="#262626" stroke-width="1"/>
 <g font-size="13" fill="#262626" text-anchor="end">
  <text x="91" y="205">5</text><text x="91" y="253">0</text><text x="91" y="301">-5</text>
 </g>
 <g font-size="13" fill="#262626" text-anchor="middle">
  <text x="96" y="315">0</text><text x="223.5" y="315">0.5</text><text x="351" y="315">1</text><text x="478.5" y="315">1.5</text><text x="606" y="315">2</text><text x="734" y="315">2.5</text>
 </g>
 <g fill="#262626"><path d="M98,188 l6,6 M104,188 l-6,6" stroke="#262626" stroke-width="0.9"/><text x="107" y="195" font-size="13">10</text><text x="122" y="189" font-size="10">-7</text></g>
 <g fill="#262626"><path d="M700,330 l6,6 M706,330 l-6,6" stroke="#262626" stroke-width="0.9"/><text x="709" y="337" font-size="13">10</text><text x="724" y="331" font-size="10">-3</text></g>
 <g font-size="15" font-weight="bold" fill="#000" text-anchor="middle">
  <text x="415.5" y="193.5">Line scan</text>
  <text x="415.5" y="356.5">Fitting</text>
  <text x="415.5" y="376">Radius of curvature = 5.1061m</text>
  <text x="415.5" y="396">Fitting Score = 0.18788</text>
 </g>
 <rect x="96.5" y="403.5" width="637.5" height="95" fill="#fff" stroke="#262626" stroke-width="1"/>
 <clipPath id="ax2"><rect x="97" y="403.5" width="637" height="94.5"/></clipPath>
 <g clip-path="url(#ax2)">
 <path d="M216.9,403.2 L221.5,404.9 L226.0,406.6 L230.6,408.3 L235.2,409.9 L239.7,411.5 L244.3,413.1 L248.9,414.6 L253.4,416.2 L258.0,417.7 L262.6,419.2 L267.1,420.7 L271.7,422.1 L276.2,423.5 L280.8,424.9 L285.4,426.3 L289.9,427.7 L294.5,429.0 L299.1,430.3 L303.6,431.6 L308.2,432.9 L312.8,434.1 L317.3,435.3 L321.9,436.5 L326.5,437.7 L331.0,438.8 L335.6,440.0 L340.2,441.1 L344.7,442.1 L349.3,443.2 L353.9,444.2 L358.4,445.2 L363.0,446.2 L367.5,447.2 L372.1,448.1 L376.7,449.0 L381.2,449.9 L385.8,450.8 L390.4,451.6 L394.9,452.5 L399.5,453.3 L404.1,454.0 L408.6,454.8 L413.2,455.5 L417.8,456.2 L422.3,456.9 L426.9,457.6 L431.5,458.2 L436.0,458.8 L440.6,459.4 L445.2,460.0 L449.7,460.5 L454.3,461.1 L458.8,461.6 L463.4,462.0 L468.0,462.5 L472.5,462.9 L477.1,463.3 L481.7,463.7 L486.2,464.1 L490.8,464.4 L495.4,464.7 L499.9,465.0 L504.5,465.3 L509.1,465.5 L513.6,465.7 L518.2,465.9 L522.8,466.1 L527.3,466.2 L531.9,466.4 L536.4,466.5 L541.0,466.6 L545.6,466.6 L550.1,466.7 L554.7,466.7 L559.3,466.7 L563.8,466.6 L568.4,466.6 L573.0,466.5 L577.5,466.4 L582.1,466.2 L586.7,466.1 L591.2,465.9 L595.8,465.7 L600.4,465.5 L604.9,465.3 L609.5,465.0 L614.1,464.7 L618.6,464.4 L623.2,464.1 L627.7,463.7 L632.3,463.3 L636.9,462.9 L641.4,462.5 L646.0,462.0 L650.6,461.6 L655.1,461.1 L659.7,460.5 L664.3,460.0 L668.8,459.4 L673.4,458.8 L678.0,458.2 L682.5,457.6 L687.1,456.9 L691.7,456.2 L696.2,455.5 L700.8,454.8 L705.4,454.0 L709.9,453.3 L714.5,452.5 L719.0,451.6 L723.6,450.8 L728.2,449.9 L732.7,449.0" fill="none" stroke="#0072bd" stroke-width="1"/>
 <path d="M308.2,430.4 L310.0,430.7 L311.9,431.2 L313.7,432.7 L315.5,432.0 L317.3,432.5 L319.2,433.6 L321.0,434.0 L322.8,435.2 L324.6,435.3 L326.5,435.1 L328.3,435.5 L330.1,436.3 L331.9,437.6 L333.8,437.8 L335.6,437.1 L337.4,438.6 L339.2,438.7 L341.1,439.6 L342.9,439.3 L344.7,439.5 L346.5,440.7 L348.4,441.4 L350.2,441.6 L352.0,442.5 L353.9,442.4 L355.7,442.2 L357.5,443.3 L359.3,443.1 L361.2,443.2 L363.0,443.9 L364.8,445.3 L366.6,445.2 L368.5,446.1 L370.3,446.2 L372.1,446.6 L373.9,446.0 L375.8,447.1 L377.6,447.3 L379.4,448.2 L381.2,447.6 L383.1,449.0 L384.9,449.3 L386.7,448.9 L388.5,449.7 L390.4,449.7 L392.2,450.4 L394.0,451.1 L395.8,450.6 L397.7,451.6 L399.5,450.8 L401.3,451.9 L403.2,452.0 L405.0,452.5 L406.8,453.4 L408.6,453.7 L410.5,452.9 L412.3,453.3 L414.1,453.8 L415.9,454.8 L417.8,455.0 L419.6,455.1 L421.4,454.4 L423.2,454.7 L425.1,455.7 L426.9,456.0 L428.7,456.3 L430.5,456.6 L432.4,456.1 L434.2,457.0 L436.0,457.8 L437.8,457.1 L439.7,457.9 L441.5,457.6 L443.3,458.0 L445.2,458.6 L447.0,459.0 L448.8,458.5 L450.6,459.4 L452.5,459.1 L454.3,460.2 L456.1,460.1 L457.9,460.0 L459.8,460.0 L461.6,460.6 L463.4,460.3 L465.2,461.0 L467.1,460.5 L468.9,460.5 L470.7,461.3 L472.5,462.0 L474.4,461.1 L476.2,461.6 L478.0,461.7 L479.8,461.8 L481.7,462.1 L483.5,462.3 L485.3,462.5 L487.1,463.5 L489.0,463.0 L490.8,463.5 L492.6,463.1 L494.5,463.4 L496.3,464.1 L498.1,463.9 L499.9,464.2 L501.8,463.9 L503.6,463.8 L505.4,464.5 L507.2,464.9 L509.1,464.6 L510.9,465.0 L512.7,464.7 L514.5,464.5 L516.4,464.6 L518.2,464.7 L520.0,464.4 L521.8,464.5 L521.8,472.6 L520.0,472.2 L518.2,472.9 L516.4,472.0 L514.5,471.5 L512.7,471.4 L510.9,472.4 L509.1,471.8 L507.2,471.7 L505.4,472.3 L503.6,471.7 L501.8,471.4 L499.9,470.8 L498.1,470.9 L496.3,470.7 L494.5,470.7 L492.6,470.3 L490.8,471.1 L489.0,471.0 L487.1,470.1 L485.3,470.8 L483.5,470.7 L481.7,470.1 L479.8,470.2 L478.0,469.5 L476.2,470.1 L474.4,469.6 L472.5,470.0 L470.7,469.4 L468.9,469.8 L467.1,469.3 L465.2,469.3 L463.4,469.1 L461.6,468.7 L459.8,468.7 L457.9,468.6 L456.1,468.2 L454.3,467.8 L452.5,467.7 L450.6,468.0 L448.8,467.4 L447.0,466.9 L445.2,467.0 L443.3,466.9 L441.5,466.6 L439.7,466.5 L437.8,466.4 L436.0,465.3 L434.2,465.2 L432.4,465.3 L430.5,465.6 L428.7,464.2 L426.9,464.1 L425.1,464.5 L423.2,463.8 L421.4,464.1 L419.6,463.3 L417.8,463.6 L415.9,462.8 L414.1,463.0 L412.3,462.9 L410.5,461.5 L408.6,461.7 L406.8,462.0 L405.0,461.0 L403.2,461.3 L401.3,460.2 L399.5,460.3 L397.7,459.3 L395.8,460.3 L394.0,458.8 L392.2,458.6 L390.4,458.4 L388.5,459.0 L386.7,458.6 L384.9,457.5 L383.1,458.0 L381.2,457.5 L379.4,457.0 L377.6,456.7 L375.8,455.8 L373.9,456.2 L372.1,455.6 L370.3,455.5 L368.5,453.9 L366.6,454.3 L364.8,454.2 L363.0,453.9 L361.2,452.4 L359.3,452.0 L357.5,452.2 L355.7,451.8 L353.9,451.2 L352.0,451.3 L350.2,450.8 L348.4,449.7 L346.5,449.4 L344.7,449.2 L342.9,449.7 L341.1,449.2 L339.2,448.4 L337.4,448.4 L335.6,447.8 L333.8,446.5 L331.9,447.0 L330.1,445.5 L328.3,445.0 L326.5,444.6 L324.6,445.2 L322.8,443.8 L321.0,443.8 L319.2,442.9 L317.3,442.2 L315.5,442.5 L313.7,441.8 L311.9,441.9 L310.0,441.5 L308.2,440.7 Z" fill="#ff0000" stroke="#ff0000" stroke-width="0.6"/>
 <path d="M304,431 l7,7 M304,438 l7,-7 M519,462 l7,7 M519,469 l7,-7" stroke="#ff0000" stroke-width="2"/>
 </g>
 <path d="M125.6,404 v5 M216.4,404 v5 M308.2,404 v5 M399.5,404 v5 M490.8,404 v5 M582.1,404 v5 M673.4,404 v5 M125.6,498 v-5 M216.4,498 v-5 M308.2,498 v-5 M399.5,498 v-5 M490.8,498 v-5 M582.1,498 v-5 M673.4,498 v-5 M97,419.5 h5 M97,443.5 h5 M97,466.5 h5 M97,490.5 h5 M733.5,419.5 h-5 M733.5,443.5 h-5 M733.5,466.5 h-5 M733.5,490.5 h-5" stroke="#262626" stroke-width="1"/>
 <g font-size="13" fill="#262626" text-anchor="end">
  <text x="91" y="424">5</text><text x="91" y="448.5">0</text><text x="91" y="472">-5</text><text x="91" y="496">-10</text>
 </g>
 <g font-size="13" fill="#262626" text-anchor="middle">
  <text x="125.6" y="519">-2</text><text x="216.4" y="519">-1</text><text x="308.2" y="519">0</text><text x="399.5" y="519">1</text><text x="490.8" y="519">2</text><text x="582.1" y="519">3</text><text x="673.4" y="519">4</text>
 </g>
 <g fill="#262626"><path d="M98,391 l6,6 M104,391 l-6,6" stroke="#262626" stroke-width="0.9"/><text x="107" y="398" font-size="13">10</text><text x="122" y="392" font-size="10">-7</text></g>
 <g fill="#262626"><path d="M700,534 l6,6 M706,534 l-6,6" stroke="#262626" stroke-width="0.9"/><text x="709" y="541" font-size="13">10</text><text x="724" y="535" font-size="10">-3</text></g>
</svg>

<!-- Slider window -->
<div class="a" style="left:25px;top:662px;width:671px;height:317px;border:1px solid #505860;border-radius:7px 7px 7px 7px;box-shadow:3px 3px 8px rgba(0,0,0,0.45);background:linear-gradient(180deg,#fdfdfd 0px,#f6f7f8 20px,#f4f5f6 29px,#f8f8f8 100%);"></div>
<svg class="a" style="left:33px;top:669px" width="16" height="16"><rect x="0.5" y="0.5" width="15" height="15" fill="#f0f0f0" stroke="#9aa0a8"/><rect x="1" y="1" width="14" height="2" fill="#7890b0"/><path d="M2,11 L7,9 L9,4 Q11,5 13,13 L10,12 L8,14 Z" fill="#e05a20"/><path d="M2,11 L7,9 L8,12 L5,13 Z" fill="#4aa0d8"/></svg>
<div class="t" style="left:54px;top:670px;font-size:12px;">Slider</div>
<div class="a" style="left:588px;top:662px;width:28px;height:19px;border:1px solid #8a9098;border-top:none;border-right:none;border-radius:0 0 0 5px;background:linear-gradient(180deg,#fbfbfb,#eef0f2);"></div>
<div class="a" style="left:616px;top:662px;width:27px;height:19px;border-left:1px solid #8a9098;border-bottom:1px solid #8a9098;background:linear-gradient(180deg,#fbfbfb,#eef0f2);"></div>
<div class="a" style="left:643px;top:662px;width:48px;height:19px;border:1px solid #8a9098;border-top:none;border-radius:0 0 5px 0;background:linear-gradient(180deg,#fbfbfb,#eef0f2);"></div>
<div class="a" style="left:596px;top:671px;width:12px;height:5px;border:1.5px solid #404858;background:#fff;"></div>
<div class="a" style="left:624px;top:666px;width:12px;height:10px;border:1px solid #b0b4b8;background:#f4f4f4;"><div class="a" style="left:2px;top:2px;width:6px;height:4px;border:1px solid #b0b4b8;"></div></div>
<svg class="a" style="left:660px;top:665px" width="14" height="14"><path d="M1.5,2.5 L4.5,2.5 L7,5.5 L9.5,2.5 L12.5,2.5 L8.7,7 L12.5,11.5 L9.5,11.5 L7,8.5 L4.5,11.5 L1.5,11.5 L5.3,7 Z" fill="#fff" stroke="#404858" stroke-width="1.1" stroke-linejoin="round"/></svg>
<div class="a" style="left:32px;top:691px;width:658px;height:281px;background:#f0f0f0;border:1px solid #8a8a8a;"></div>
<!-- labels -->
<div class="t" style="left:78px;top:719px;font-size:16px;">Y</div>
<div class="t" style="left:238px;top:710px;font-size:18px;-webkit-text-stroke:0.3px #000;">move line</div>
<div class="t" style="left:347px;top:712px;font-size:16px;">X: 501</div>
<div class="t" style="left:588px;top:716px;font-size:15px;">In Y verkürzen</div>
<div class="t" style="left:148px;top:821px;font-size:16px;">X1:</div>
<div class="t" style="left:297px;top:821px;font-size:16px;">X2:</div>
<div class="t" style="left:447px;top:897px;font-size:15px;">Mittelwert:</div>
<!-- Y slider left -->
<div class="a" style="left:59px;top:742px;width:51px;height:149px;background:#e5e5e5;border:1px solid #9a9a9a;border-left:1px solid #a8a8a8;border-right:2px solid #8a8a8a;"></div>
<div class="a" style="left:60px;top:742px;width:48px;height:14px;background:#f0f0f0;border-bottom:2px solid #8a8a8a;"></div>
<svg class="a" style="left:79px;top:745px" width="10" height="6"><path d="M0.5,5.5 L5,1 L9.5,5.5 Z" fill="#606060"/></svg>
<div class="a" style="left:60px;top:812px;width:48px;height:10px;background:#f2f2f2;border-top:1px solid #fff;border-bottom:2px solid #8a8a8a;"></div>
<div class="a" style="left:60px;top:877px;width:48px;height:13px;background:#f0f0f0;border-top:1px solid #fff;"></div>
<svg class="a" style="left:79px;top:880px" width="10" height="6"><path d="M0.5,0.5 L5,5 L9.5,0.5 Z" fill="#606060"/></svg>
<!-- Y slider right -->
<div class="a" style="left:613px;top:742px;width:51px;height:149px;background:#e5e5e5;border:1px solid #9a9a9a;border-left:1px solid #a8a8a8;border-right:2px solid #8a8a8a;"></div>
<div class="a" style="left:614px;top:742px;width:48px;height:14px;background:#f0f0f0;border-bottom:2px solid #8a8a8a;"></div>
<svg class="a" style="left:633px;top:745px" width="10" height="6"><path d="M0.5,5.5 L5,1 L9.5,5.5 Z" fill="#606060"/></svg>
<div class="a" style="left:614px;top:812px;width:48px;height:10px;background:#f2f2f2;border-top:1px solid #fff;border-bottom:2px solid #8a8a8a;"></div>
<div class="a" style="left:614px;top:877px;width:48px;height:13px;background:#f0f0f0;border-top:1px solid #fff;"></div>
<svg class="a" style="left:633px;top:880px" width="10" height="6"><path d="M0.5,0.5 L5,5 L9.5,0.5 Z" fill="#606060"/></svg>
<!-- horizontal slider -->
<div class="a" style="left:132px;top:743px;width:291px;height:48px;background:#e5e5e5;border-top:1px solid #fff;border-bottom:2px solid #8a8a8a;border-right:2px solid #8a8a8a;"></div>
<div class="a" style="left:132px;top:743px;width:15px;height:46px;background:#f0f0f0;border-right:2px solid #8a8a8a;"></div>
<svg class="a" style="left:137px;top:762px" width="6" height="10"><path d="M5.5,0.5 L1,5 L5.5,9.5 Z" fill="#606060"/></svg>
<div class="a" style="left:147px;top:743px;width:119px;height:46px;background:#e5e5e5;border-top:2px solid #8a8a8a;"></div>
<div class="a" style="left:265px;top:743px;width:21px;height:46px;background:#f2f2f2;border-left:1px solid #fff;border-right:2px solid #8a8a8a;"></div>
<div class="a" style="left:286px;top:743px;width:122px;height:46px;background:#e5e5e5;border-top:2px solid #8a8a8a;"></div>
<div class="a" style="left:408px;top:743px;width:13px;height:46px;background:#f0f0f0;border-left:1px solid #fff;"></div>
<svg class="a" style="left:411px;top:762px" width="6" height="10"><path d="M0.5,0.5 L5,5 L0.5,9.5 Z" fill="#606060"/></svg>
<!-- buttons -->
<div class="a" style="left:447px;top:742px;width:148px;height:48px;border:1px solid #707070;border-radius:3px;background:linear-gradient(180deg,#f2f2f2 0%,#ebebeb 50%,#dddddd 51%,#cfcfcf 100%);box-shadow:inset 0 0 0 1px #fcfcfc;"></div>
<div class="t" style="left:447px;top:759px;width:148px;text-align:center;font-size:16px;">Werte speichern</div>
<div class="a" style="left:147px;top:842px;width:99px;height:49px;border:1px solid #707070;border-radius:3px;background:linear-gradient(180deg,#f2f2f2 0%,#ebebeb 50%,#dddddd 51%,#cfcfcf 100%);box-shadow:inset 0 0 0 1px #fcfcfc;"></div>
<div class="t" style="left:147px;top:861px;width:99px;text-align:center;font-size:11px;">Interval Grenze 1</div>
<div class="a" style="left:297px;top:842px;width:99px;height:49px;border:1px solid #707070;border-radius:3px;background:linear-gradient(180deg,#f2f2f2 0%,#ebebeb 50%,#dddddd 51%,#cfcfcf 100%);box-shadow:inset 0 0 0 1px #fcfcfc;"></div>
<div class="t" style="left:297px;top:861px;width:99px;text-align:center;font-size:11px;">Interval Grenze 2</div>
<div class="a" style="left:447px;top:842px;width:122px;height:49px;border:1px solid #707070;border-radius:3px;background:linear-gradient(180deg,#f2f2f2 0%,#ebebeb 50%,#dddddd 51%,#cfcfcf 100%);box-shadow:inset 0 0 0 1px #fcfcfc;"></div>
<div class="t" style="left:447px;top:861px;width:122px;text-align:center;font-size:11px;">Mittelwert berechnen</div>
<div class="a" style="left:61px;top:919px;width:149px;height:49px;border:1px solid #707070;border-radius:3px;background:linear-gradient(180deg,#f2f2f2 0%,#ebebeb 50%,#dddddd 51%,#cfcfcf 100%);box-shadow:inset 0 0 0 1px #fcfcfc;"></div>
<div class="t" style="left:61px;top:938px;width:149px;text-align:center;font-size:11px;">Auto Linescan</div>

</body></html>
